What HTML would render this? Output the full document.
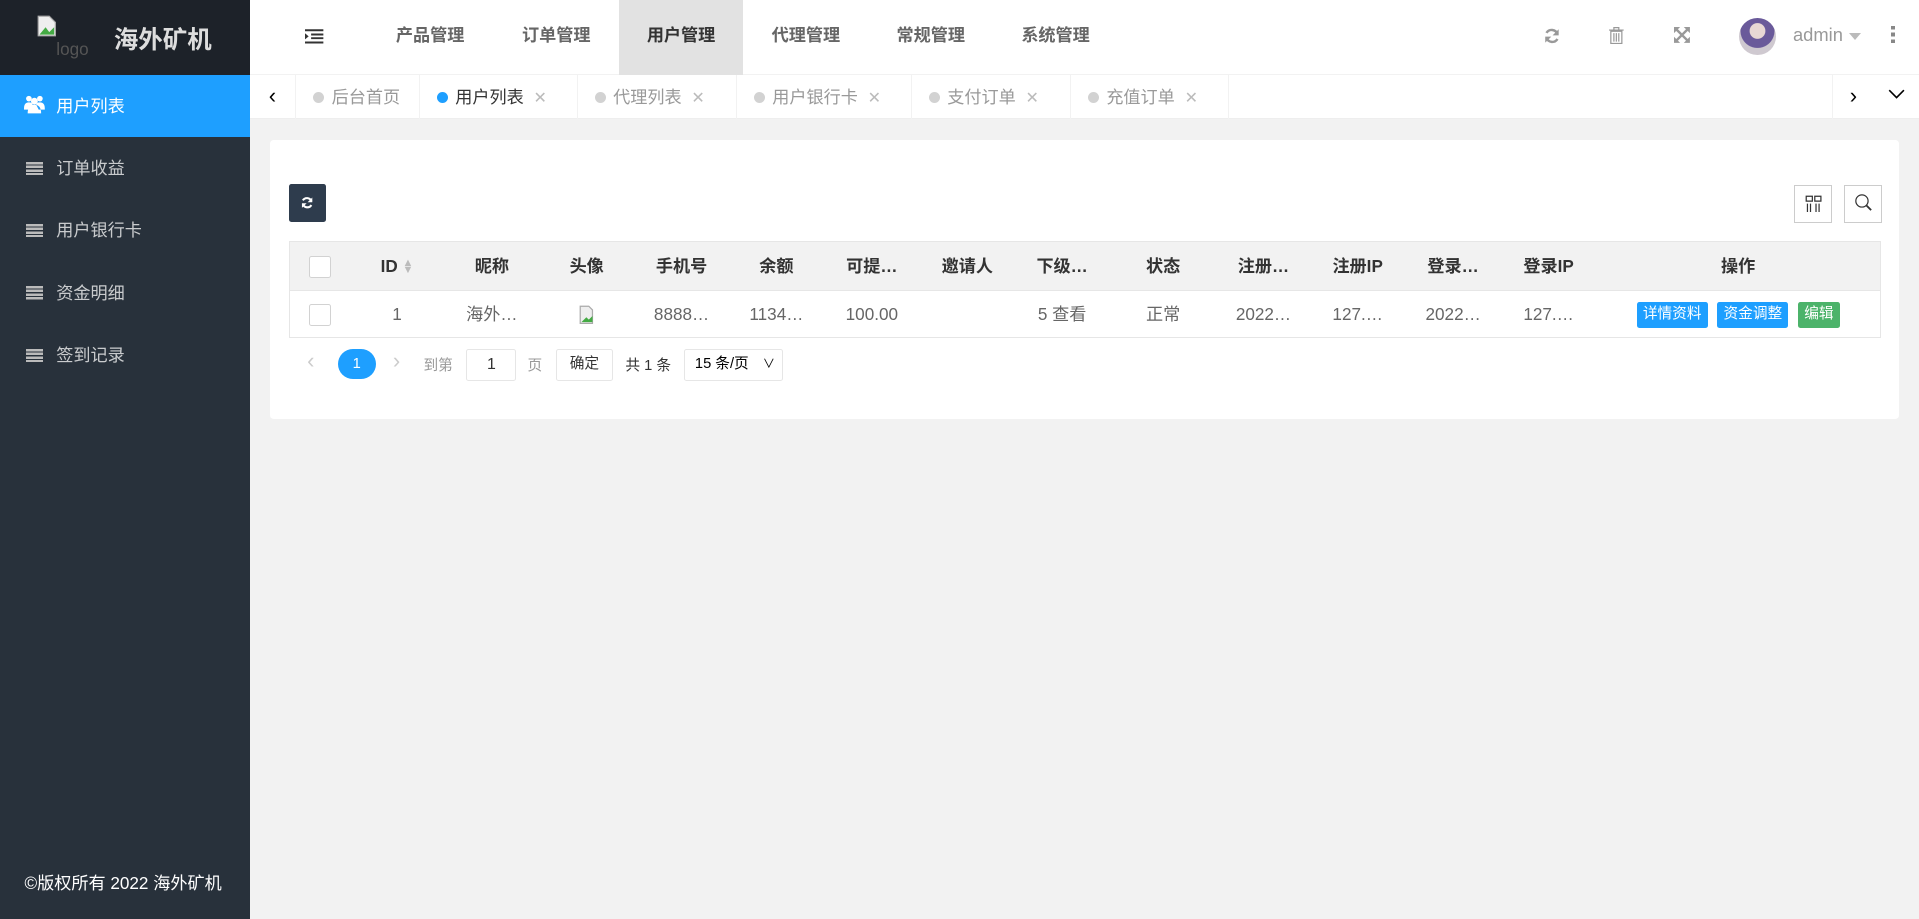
<!DOCTYPE html>
<html><head><meta charset="utf-8"><style>
*{margin:0;padding:0;box-sizing:border-box}
html,body{width:1919px;height:919px;overflow:hidden;background:#f2f2f2}
#root{width:1568px;height:751px;zoom:1.22385;position:relative;font-family:"Liberation Sans","Noto Sans CJK SC",sans-serif;font-size:14px;color:#666;background:#f2f2f2}
.abs{position:absolute}
.side{left:0;top:0;width:204px;height:751px;background:#28313b}
.logo{left:0;top:0;width:204px;height:61px;background:#1d2229}
.logo .t{left:93px;top:17px;font-size:20px;font-weight:bold;color:#ddd}
.logo .a{left:46px;top:32px;font-size:14px;color:#555}
.menu{left:0;width:204px;height:51px;color:rgba(255,255,255,.75);line-height:51px}
.menu span{position:absolute;left:46px}
.menu.on{background:#1e9fff;color:#fff}
.li{position:absolute;left:21px;top:20px;width:14px;height:11px;background:repeating-linear-gradient(#bbb 0 2px,transparent 2px 3px)}
.hdr{left:204px;top:0;width:1364px;height:61px;background:#fff;border-bottom:1px solid #f2f2f2}
.nav{top:0;height:61px;line-height:58px;width:101px;text-align:center;font-weight:bold;color:#666;font-size:14px}
.nav.on{background:#e2e2e2;color:#333}
.tabs{left:204px;top:61px;width:1364px;height:36px;background:#fff;border-bottom:1px solid #eee}
.tab{top:61px;height:36px;line-height:36px;border-right:1px solid #f2f2f2;color:#999;padding-left:14px}
.tab i{display:inline-block;width:9px;height:9px;border-radius:50%;background:#d2d2d2;margin-right:6px}
.tab b{font-weight:normal;color:#bbb;margin-left:8px;font-size:13px}
.card{left:221px;top:114px;width:1331px;height:228px;background:#fff;border-radius:3px}
table{border-collapse:collapse;table-layout:fixed;position:absolute;left:236px;top:197px;width:1301px}
td,th{border-top:1px solid #e6e6e6;border-bottom:1px solid #e6e6e6;text-align:center;font-size:14px;white-space:nowrap;overflow:hidden;line-height:20px}
th{background:#f2f2f2;height:40px;color:#333;font-weight:bold}
td{height:38px;color:#666}
table{border-left:1px solid #e6e6e6;border-right:1px solid #e6e6e6}
.cb{display:inline-block;width:18px;height:18px;border:1px solid #d2d2d2;border-radius:2px;background:#fff;vertical-align:middle}
.btn{display:inline-block;height:21px;line-height:21px;padding:0 5px;font-size:12px;color:#fff;background:#1e9fff;border-radius:2px;margin:0 4px}
.ib{border:1px solid #ccc;width:31px;height:31px;background:#fff}
</style></head><body><div id="root">
<div class="abs side"></div>
<div class="abs logo">
 <svg class="abs" style="left:30px;top:12px" width="16" height="18"><path d="M1 1h9l5 5v11H1z" fill="#eee" stroke="#aaa"/><path d="M2 16l5-6 3 4 4-4v6z" fill="#4a4"/></svg>
 <div class="abs a">logo</div><div class="abs t">海外矿机</div>
</div>
<div class="abs menu on" style="top:61px"><svg class="abs" style="left:20px;top:17px" width="17" height="15" viewBox="0 0 17 15"><circle cx="4" cy="3" r="2.3" fill="#fff"/><circle cx="13" cy="3" r="2.3" fill="#fff"/><circle cx="8.5" cy="5" r="2.8" fill="#fff"/><path d="M0 11q0-5 4-5 3 0 3 2l-2 4H0zM17 11q0-5-4-5-3 0-3 2l2 4h5zM3 15q0-7 5.5-7T14 15z" fill="#fff"/></svg><span>用户列表</span></div>
<div class="abs menu" style="top:112px"><i class="li"></i><span>订单收益</span></div>
<div class="abs menu" style="top:163px"><i class="li"></i><span>用户银行卡</span></div>
<div class="abs menu" style="top:214px"><i class="li"></i><span>资金明细</span></div>
<div class="abs menu" style="top:265px"><i class="li"></i><span>签到记录</span></div>
<div class="abs" style="left:20px;top:710px;color:#fff;font-size:14px">©版权所有 2022 海外矿机</div>

<div class="abs hdr"></div>
<svg class="abs" style="left:249px;top:24px" width="16" height="12"><path d="M0 1h15M5 4.5h10M5 7.5h10M0 11h15" stroke="#333" stroke-width="1.6"/><path d="M0 3.5l3 2.5-3 2.5z" fill="#333"/></svg>
<div class="abs nav" style="left:301px">产品管理</div>
<div class="abs nav" style="left:404px">订单管理</div>
<div class="abs nav on" style="left:506px">用户管理</div>
<div class="abs nav" style="left:608px">代理管理</div>
<div class="abs nav" style="left:710px">常规管理</div>
<div class="abs nav" style="left:812px">系统管理</div>
<svg class="abs" style="left:1262px;top:23px" width="13" height="13" viewBox="0 0 13 13"><path d="M11 5A5 5 0 0 0 2 4M2 8a5 5 0 0 0 9 1" stroke="#999" stroke-width="2" fill="none"/><path d="M12 1v5H7zM1 12V7h5z" fill="#999"/></svg>
<svg class="abs" style="left:1315px;top:22px" width="12" height="14"><path d="M0 2.5h12M4 2V0.5h4V2M1.5 3.5h9v10h-9z M4 5v7M6 5v7M8 5v7" stroke="#999" fill="none"/></svg>
<svg class="abs" style="left:1368px;top:22px" width="13" height="13"><path d="M1 1l11 11M12 1L1 12" stroke="#999" stroke-width="2"/><path d="M0 0h5L0 5zM13 0h-5l5 5zM0 13h5L0 8zM13 13H8l5-5z" fill="#999"/></svg>
<div class="abs" style="left:1421px;top:15px;width:30px;height:30px;border-radius:50%;background:radial-gradient(circle at 50% 35%,#e8d8d4 0 25%,#6a5a9a 27% 55%,#cfc9d0 57%)"></div>
<div class="abs" style="left:1465px;top:20px;color:#999;font-size:15px">admin</div>
<div class="abs" style="left:1511px;top:27px;border:5px solid transparent;border-top:6px solid #bbb"></div>
<div class="abs" style="left:1545px;top:21px;width:3px;height:14px;background:repeating-linear-gradient(#888 0 3px,transparent 3px 5.5px)"></div>

<div class="abs tabs"></div>
<div class="abs" style="left:204px;top:61px;width:38px;height:36px;border-right:1px solid #f2f2f2;text-align:center;line-height:34px;color:#000;font-size:18px">‹</div>
<div class="abs tab" style="left:242px;width:101px"><i></i>后台首页</div>
<div class="abs tab" style="left:343px;width:129px;color:#333"><i style="background:#1e9fff"></i>用户列表<b>✕</b></div>
<div class="abs tab" style="left:472px;width:130px"><i></i>代理列表<b>✕</b></div>
<div class="abs tab" style="left:602px;width:143px"><i></i>用户银行卡<b>✕</b></div>
<div class="abs tab" style="left:745px;width:130px"><i></i>支付订单<b>✕</b></div>
<div class="abs tab" style="left:875px;width:129px"><i></i>充值订单<b>✕</b></div>
<div class="abs" style="left:1497px;top:61px;width:34px;height:36px;border-left:1px solid #f2f2f2;text-align:center;line-height:34px;color:#000;font-size:18px">›</div>
<svg class="abs" style="left:1543px;top:73px" width="14" height="9"><path d="M1 1l6 6 6-6" stroke="#000" fill="none" stroke-width="1.3"/></svg>

<div class="abs card"></div>
<div class="abs" style="left:236px;top:150px;width:30px;height:31px;background:#2e3c4d;border-radius:2px"></div>
<svg class="abs" style="left:246px;top:160px" width="10" height="11" viewBox="0 0 13 13"><path d="M11 5A5 5 0 0 0 2 4M2 8a5 5 0 0 0 9 1" stroke="#fff" stroke-width="2.2" fill="none"/><path d="M12 1v5H7zM1 12V7h5z" fill="#fff"/></svg>
<div class="abs ib" style="left:1466px;top:151px"></div>
<svg class="abs" style="left:1475px;top:159px" width="14" height="14"><path d="M1 1h5v4H1zM8 1h5v4H8zM2 7v7M4.5 7v7M9 7v7M11.5 7v7" stroke="#333" fill="none"/></svg>
<div class="abs ib" style="left:1507px;top:151px"></div>
<svg class="abs" style="left:1515px;top:158px" width="16" height="16"><circle cx="6.5" cy="6.5" r="5" stroke="#333" fill="none"/><path d="M10 10l4 4" stroke="#333" stroke-width="1.5"/></svg>

<table>
<colgroup><col style="width:49px"><col style="width:78px"><col style="width:77px"><col style="width:78px"><col style="width:77px"><col style="width:78px"><col style="width:78px"><col style="width:78px"><col style="width:77px"><col style="width:88px"><col style="width:76px"><col style="width:78px"><col style="width:78px"><col style="width:78px"><col></colgroup>
<tr><th><span class="cb"></span></th><th>ID <span style="font-size:9px;color:#bbb;display:inline-block;line-height:6px;vertical-align:middle">▲<br>▼</span></th><th>昵称</th><th>头像</th><th>手机号</th><th>余额</th><th>可提…</th><th>邀请人</th><th>下级…</th><th>状态</th><th>注册…</th><th>注册IP</th><th>登录…</th><th>登录IP</th><th>操作</th></tr>
<tr><td><span class="cb"></span></td><td>1</td><td>海外…</td><td><svg width="12" height="16" style="vertical-align:middle"><path d="M1 1h7l3 3v11H1z" fill="#eee" stroke="#aaa"/><path d="M2 14l4-4 2 2 3-3v5z" fill="#4a4"/></svg></td><td>8888…</td><td>1134…</td><td>100.00</td><td></td><td>5 查看</td><td>正常</td><td>2022…</td><td>127.…</td><td>2022…</td><td>127.…</td><td><span class="btn">详情资料</span><span class="btn">资金调整</span><span class="btn" style="background:#4cb36a">编辑</span></td></tr>
</table>

<div class="abs" style="left:251px;top:284px;color:#ccc;font-size:18px">‹</div>
<div class="abs" style="left:276px;top:285px;width:31px;height:25px;border-radius:13px;background:#1e9fff;color:#fff;text-align:center;line-height:25px;font-size:12px">1</div>
<div class="abs" style="left:321px;top:284px;color:#ccc;font-size:18px">›</div>
<div class="abs" style="left:346px;top:289px;color:#999;font-size:12px">到第</div>
<div class="abs" style="left:381px;top:285px;width:41px;height:26px;border:1px solid #e6e6e6;border-radius:2px;text-align:center;line-height:24px;color:#333;font-size:13px">1</div>
<div class="abs" style="left:431px;top:289px;color:#999;font-size:12px">页</div>
<div class="abs" style="left:454px;top:285px;width:47px;height:26px;border:1px solid #e6e6e6;border-radius:2px;text-align:center;line-height:24px;color:#333;font-size:12px">确定</div>
<div class="abs" style="left:511px;top:289px;color:#333;font-size:12px">共 1 条</div>
<div class="abs" style="left:559px;top:285px;width:81px;height:26px;border:1px solid #e6e6e6;border-radius:2px;line-height:24px;color:#000;font-size:12px;padding-left:8px">15 条/页<span style="position:absolute;right:6px;font-size:10px">∨</span></div>
</div></body></html>
